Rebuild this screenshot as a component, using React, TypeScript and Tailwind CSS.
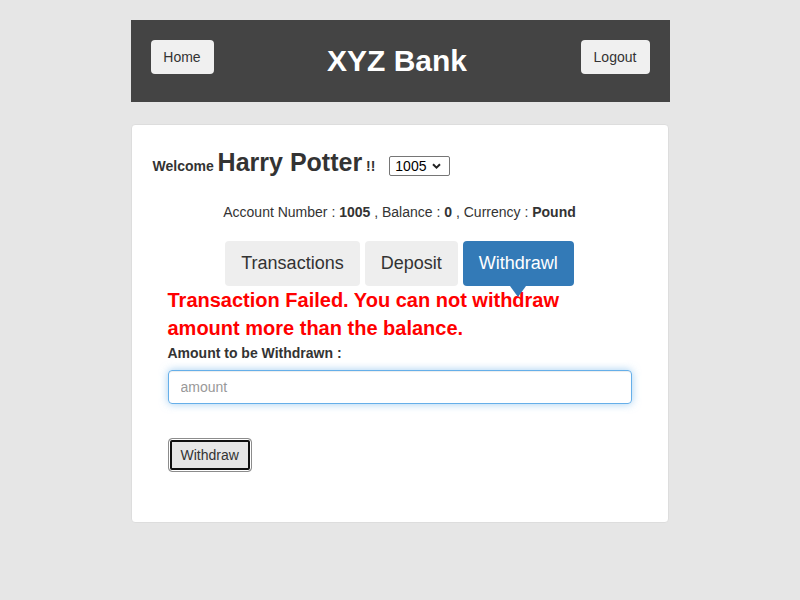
import { useState } from "react";

const tabs = ["Transactions", "Deposit", "Withdrawl"];

export default function App() {
  const [active, setActive] = useState("Withdrawl");
  const [amount, setAmount] = useState("");

  return (
    <div className="min-h-screen bg-[#e6e6e6] pt-5 font-['Liberation_Sans',Arial,sans-serif] text-[#333]">
      <div className="mx-auto w-[539px]">
        {/* header */}
        <header className="flex h-[82px] items-start bg-[#444] px-5 pt-5">
          <button className="h-[34px] w-[63px] rounded bg-[#f0f0f0] text-sm leading-5 text-[#333]">Home</button>
          <div className="mt-1 flex-1 text-center text-[30px] font-bold leading-[33px] text-white">XYZ Bank</div>
          <button className="h-[34px] w-[69px] rounded bg-[#f0f0f0] text-sm leading-5 text-[#333]">Logout</button>
        </header>

        {/* account card */}
        <main className="mt-[22px] w-[538px] rounded border border-[#ddd] bg-white pb-[50px] pt-[22px]">
          <div className="pl-[21px] text-sm font-bold leading-[30px]">
            Welcome <span className="text-[25px]">Harry Potter</span> !!
            <span className="ml-[14px] inline-flex h-5 items-center rounded-[2px] border border-[#767676] pl-[5px] pr-2 align-baseline text-sm font-normal leading-5 text-black">
              1005
              <svg className="ml-[6px]" width="9" height="6" viewBox="0 0 9 6">
                <path d="M1 1.2 L4.5 4.6 L8 1.2" fill="none" stroke="#222" strokeWidth="2" />
              </svg>
            </span>
          </div>

          <div className="mt-[21px] text-center text-sm leading-5">
            Account Number : <strong>1005</strong> , Balance : <strong>0</strong> , Currency : <strong>Pound</strong>
          </div>

          <nav className="mt-[19px] flex justify-center gap-[5px]">
            {tabs.map(t => (
              <button
                key={t}
                onClick={() => setActive(t)}
                className={`relative rounded px-4 py-[10px] text-[18px] leading-[25px] ${
                  active === t ? "bg-[#337ab7] text-white" : "bg-[#eee] text-[#333]"
                }`}
              >
                {t}
                {active === t && (
                  <span className="absolute left-1/2 top-full -translate-x-1/2 border-x-[8px] border-t-[11px] border-x-transparent border-t-[#337ab7]" />
                )}
              </button>
            ))}
          </nav>

          <div className="px-9">
            <p className="text-[20px] font-bold leading-[28px] text-[#ff0000]">
              Transaction Failed. You can not withdraw amount more than the balance.
            </p>
            <label className="mt-px mb-[7px] block text-sm font-bold leading-5">Amount to be Withdrawn :</label>
            <input
              value={amount}
              onChange={e => setAmount(e.target.value)}
              placeholder="amount"
              className="block h-[34px] w-full rounded border border-[#66afe9] px-3 text-sm text-[#555] shadow-[inset_0_1px_1px_rgba(0,0,0,0.075),0_0_8px_rgba(102,175,233,0.6)] outline-none placeholder:text-[#999]"
            />
            <button className="mt-[34px] h-[34px] rounded border border-[#8c8c8c] bg-[#e6e6e6] px-3 text-sm leading-5 text-[#333] shadow-[inset_0_0_0_1px_#fff,inset_0_0_0_3px_#101010]">
              Withdraw
            </button>
          </div>
        </main>
      </div>
    </div>
  );
}
